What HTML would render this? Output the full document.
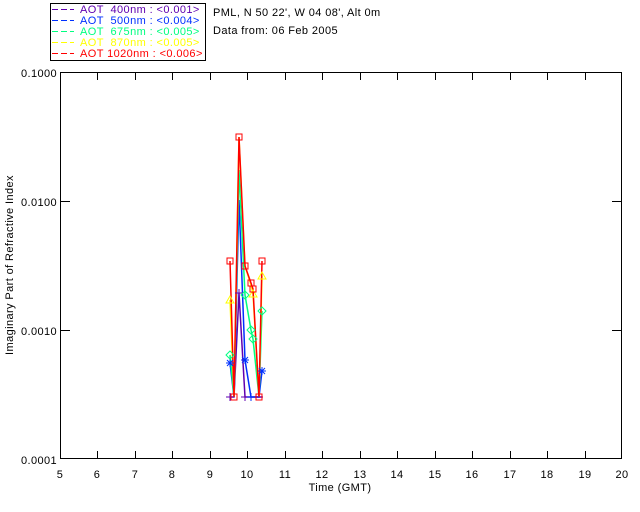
<!DOCTYPE html>
<html><head><style>
html,body{margin:0;padding:0;background:#fff;width:640px;height:512px;overflow:hidden}
svg{display:block}
text{font-family:"Liberation Sans","DejaVu Sans",sans-serif;font-size:11px;letter-spacing:0.4px}
</style></head><body>
<svg width="640" height="512" viewBox="0 0 640 512" xmlns="http://www.w3.org/2000/svg">
<rect x="50.5" y="3.5" width="155" height="57" fill="#fff" stroke="#000"/>
<g stroke-width="1" stroke-dasharray="6,3">
<line x1="52" y1="9.5" x2="74" y2="9.5" stroke="#6000b0"/>
<line x1="52" y1="20.5" x2="74" y2="20.5" stroke="#0030ff"/>
<line x1="52" y1="31.5" x2="74" y2="31.5" stroke="#00ff80"/>
<line x1="52" y1="42.5" x2="74" y2="42.5" stroke="#ffff00"/>
<line x1="52" y1="53.5" x2="74" y2="53.5" stroke="#ff0000"/>
</g>
<text x="80" y="13" fill="#6000b0" xml:space="preserve">AOT  400nm : &lt;0.001&gt;</text>
<text x="80" y="24" fill="#0030ff" xml:space="preserve">AOT  500nm : &lt;0.004&gt;</text>
<text x="80" y="35" fill="#00ff80" xml:space="preserve">AOT  675nm : &lt;0.005&gt;</text>
<text x="80" y="46" fill="#ffff00" xml:space="preserve">AOT  870nm : &lt;0.005&gt;</text>
<text x="80" y="57" fill="#ff0000" xml:space="preserve">AOT 1020nm : &lt;0.006&gt;</text>
<text x="213" y="16" fill="#000">PML, N 50 22', W 04 08', Alt 0m</text>
<text x="213" y="34" fill="#000">Data from: 06 Feb 2005</text>
<rect x="60.5" y="72.5" width="561" height="386" fill="none" stroke="#000"/>
<g stroke="#000">
<path d="M97.5 72v8M135.5 72v8M172.5 72v8M210.5 72v8M247.5 72v8M285.5 72v8M322.5 72v8M360.5 72v8M397.5 72v8M435.5 72v8M472.5 72v8M510.5 72v8M547.5 72v8M585.5 72v8"/>
<path d="M97.5 459v-8M135.5 459v-8M172.5 459v-8M210.5 459v-8M247.5 459v-8M285.5 459v-8M322.5 459v-8M360.5 459v-8M397.5 459v-8M435.5 459v-8M472.5 459v-8M510.5 459v-8M547.5 459v-8M585.5 459v-8"/>
<path d="M60 201.5h10M60 330.5h10M622 201.5h-10M622 330.5h-10"/>
</g>
<g fill="#000">
<text x="21" y="77">0.1000</text>
<text x="21" y="206">0.0100</text>
<text x="21" y="335">0.0010</text>
<text x="21" y="464">0.0001</text>
</g>
<g fill="#000" text-anchor="middle">
<text x="60" y="478">5</text><text x="97" y="478">6</text><text x="135" y="478">7</text><text x="172" y="478">8</text><text x="210" y="478">9</text><text x="247" y="478">10</text><text x="285" y="478">11</text><text x="322" y="478">12</text><text x="360" y="478">13</text><text x="397" y="478">14</text><text x="435" y="478">15</text><text x="472" y="478">16</text><text x="510" y="478">17</text><text x="547" y="478">18</text><text x="585" y="478">19</text><text x="622" y="478">20</text>
<text x="340" y="491">Time (GMT)</text>
<text transform="translate(13,265) rotate(-90)">Imaginary Part of Refractive Index</text>
</g>
<g fill="none" stroke-width="1.5">
<polyline stroke="#6000b0" points="230,397 234,397 239,293 245,397 251,397 253,397 259,397 262,397"/>
<polyline stroke="#0030ff" points="230,363 234,397 239,200 245,360 251,397 253,397 259,397 262,371"/>
<polyline stroke="#00ff80" points="230,355 234,397 239,170 245,295 251,330 253,339 259,397 262,311"/>
<polyline stroke="#ffff00" points="230,300 234,397 239,137 245,266 251,285 253,294 259,397 262,276"/>
<polyline stroke="#ff0000" points="230,261 234,397 239,137 245,266 251,283 253,289 259,397 262,261"/>
</g>
<g stroke="#6000b0"><path d="M226 397h8M230 393v8M235 293h8M239 289v8M241 397h8M245 393v8M247 397h8M255 397h8"/></g>
<g stroke="#0030ff"><path d="M226 363h8M230 359v8M227 360l6 6M233 360l-6 6M241 360h8M245 356v8M242 357l6 6M248 357l-6 6M247 397h8M251 393v8M258 371h8M262 367v8M259 368l6 6M265 368l-6 6"/></g>
<g stroke="#00ff80" fill="none"><path d="M230 351l4 4-4 4-4-4zM262 307l4 4-4 4-4-4zM251 326l4 4-4 4-4-4zM253 335l4 4-4 4-4-4zM245 291l4 4-4 4-4-4z"/></g>
<g stroke="#ffff00" fill="none"><path d="M230 296l4 7h-8zM262 272l4 7h-8zM253 290l4 7h-8z"/></g>
<g stroke="#ff0000" fill="none">
<rect x="227" y="258" width="6" height="6"/><rect x="231" y="394" width="6" height="6"/><rect x="236" y="134" width="6" height="6"/><rect x="242" y="263" width="6" height="6"/><rect x="248" y="280" width="6" height="6"/><rect x="250" y="286" width="6" height="6"/><rect x="256" y="394" width="6" height="6"/><rect x="259" y="258" width="6" height="6"/>
</g>
</svg>
</body></html>
